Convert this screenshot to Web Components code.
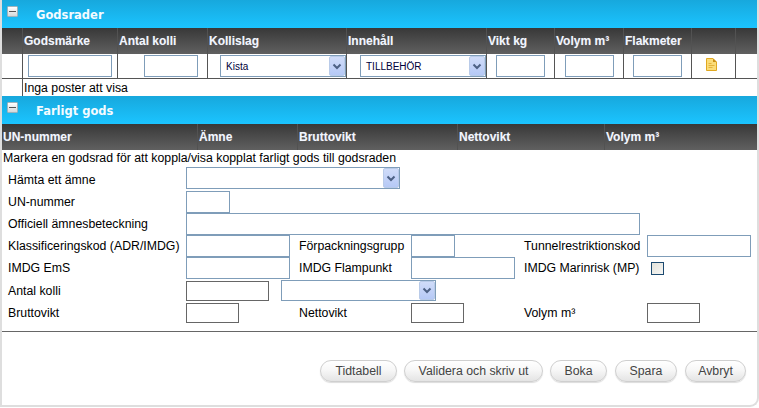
<!DOCTYPE html>
<html>
<head>
<meta charset="utf-8">
<title>Godsrader</title>
<style>
    html, body { margin: 0; background: #fff; }
    body { font: 12.3px "Liberation Sans", Arial, sans-serif; color: #000; }
</style>
</head>
<body>
<booking-panel>
    <section-bar>Godsrader</section-bar>
    <grid-row kind="head" columns="20 95 90 139 140 68 69 68 44 22">
        <span></span><span>Godsmärke</span><span>Antal kolli</span><span>Kollislag</span><span>Innehåll</span><span>Vikt kg</span><span>Volym m³</span><span>Flakmeter</span><span></span><span></span>
    </grid-row>
    <grid-row kind="body" columns="20 95 90 139 140 68 69 68 44 22">
        <span></span>
        <span><text-box width="84" style="margin-left:5px"></text-box></span>
        <span><text-box width="54" style="margin-left:26px"></text-box></span>
        <span><drop-down width="126" style="margin-left:12px">Kista</drop-down></span>
        <span><drop-down width="126" style="margin-left:13px">TILLBEHÖR</drop-down></span>
        <span><text-box width="49" style="margin-left:9px"></text-box></span>
        <span><text-box width="49" style="margin-left:10px"></text-box></span>
        <span><text-box width="49" style="margin-left:9px"></text-box></span>
        <span><note-icon></note-icon></span>
        <span></span>
    </grid-row>
    <grid-row kind="note" columns="20 735">
        <span></span><span>Inga poster att visa</span>
    </grid-row>
    <section-bar>Farligt gods</section-bar>
    <grid-row kind="head" columns="195 100 160 147 153">
        <span>UN-nummer</span><span>Ämne</span><span>Bruttovikt</span><span>Nettovikt</span><span>Volym m³</span>
    </grid-row>
    <hazard-form>
        <p slot="hint">Markera en godsrad för att koppla/visa kopplat farligt gods till godsraden</p>

        <label style="padding-top:2px">Hämta ett ämne</label>
        <drop-down width="214" class="wide"></drop-down>

        <label>UN-nummer</label>
        <text-box width="44" class="wide"></text-box>

        <label>Officiell ämnesbeteckning</label>
        <text-box width="454" class="wide"></text-box>

        <label>Klassificeringskod (ADR/IMDG)</label>
        <text-box width="104"></text-box>
        <label>Förpackningsgrupp</label>
        <text-box width="44"></text-box>
        <label>Tunnelrestriktionskod</label>
        <text-box width="104"></text-box>

        <label>IMDG EmS</label>
        <text-box width="104"></text-box>
        <label>IMDG Flampunkt</label>
        <text-box width="104"></text-box>
        <label>IMDG Marinrisk (MP)</label>
        <tick-box style="margin:5px 0 0 4px"></tick-box>

        <label>Antal kolli</label>
        <text-box width="83" height="20" tone="plain" style="margin-top:2px"></text-box>
        <drop-down width="155" height="21" class="rest" style="margin:1px 0 0 -18px"></drop-down>

        <label>Bruttovikt</label>
        <text-box width="53" height="20" tone="plain"></text-box>
        <label>Nettovikt</label>
        <text-box width="53" height="20" tone="plain"></text-box>
        <label>Volym m³</label>
        <text-box width="53" height="20" tone="plain"></text-box>
    </hazard-form>
    <action-bar>
        <pill-button width="77">Tidtabell</pill-button>
        <pill-button width="139">Validera och skriv ut</pill-button>
        <pill-button width="57">Boka</pill-button>
        <pill-button width="62" style="margin-left:1px">Spara</pill-button>
        <pill-button width="61" style="margin-left:1px">Avbryt</pill-button>
    </action-bar>
</booking-panel>

<script>
/// Base class: fills the shadow root once, from the markup() of the subclass.
class ShadowBox extends HTMLElement {
    connectedCallback() {
        if (this.shadowRoot) return
        const shadow = this.attachShadow({mode: "open"})
        shadow.innerHTML = this.markup()
    }
}

class BookingPanel extends ShadowBox {
    markup() {
        return `
            <style>
                :host {
                    display: block;
                    box-sizing: border-box;
                    width: 759px;
                    height: 407px;
                    border: 2px solid #dedede;
                    border-top: 0;
                    border-radius: 0 0 9px 0;
                    background: #fff;
                    overflow: hidden;
                }
            </style>
            <slot></slot>
        `
    }
}

/// Blue section title with a collapse button.
class SectionBar extends ShadowBox {
    markup() {
        return `
            <style>
                :host {
                    display: flex;
                    align-items: center;
                    height: 28px;
                    background: linear-gradient(#17a8dd, #1bc4ff);
                    color: #f4fbff;
                    font: bold 11.5px "DejaVu Sans", Verdana, sans-serif;
                }
                .toggle {
                    box-sizing: border-box;
                    width: 11px;
                    height: 11px;
                    margin: -5px 18px 0 5px;
                    display: flex;
                    align-items: center;
                    justify-content: center;
                    border: 1px solid #9fb4bd;
                    border-radius: 1px;
                    background: linear-gradient(#ffffff, #d4d8da);
                }
                .toggle i { display: block; width: 7px; height: 1px; background: #555; }
                .title { margin-top: 2px; }
            </style>
            <span class="toggle"><i></i></span>
            <span class="title"><slot></slot></span>
        `
    }
}

/// A table row; the columns attribute holds the pixel widths.
class GridRow extends ShadowBox {
    markup() {
        const kind = this.getAttribute("kind")
        const columns = this.getAttribute("columns").split(" ").map(w => w + "px").join(" ")
        return `
            <style>
                :host {
                    display: block;
                    --columns: ${columns};
                }
                .row { display: grid; grid-template-columns: var(--columns); }
                .head {
                    height: 26px;
                    align-items: stretch;
                    background: linear-gradient(#383838, #606060);
                    color: #f2f6ff;
                    font-weight: bold;
                    font-size: 12px;
                }
                .body { height: 25px; box-sizing: border-box; border-bottom: 1px solid #555; }
                .note { height: 17px; }
            </style>
            <div class="row ${kind}"><slot></slot></div>
        `
    }

    // cell separators live on the light DOM spans, so they are set here
    connectedCallback() {
        super.connectedCallback()
        const kind = this.getAttribute("kind")
        const line = kind == "head" ? "#525252" : "#555"
        Array.from(this.children).forEach((cell, index) => {
            cell.style.display = "flex"
            cell.style.alignItems = "center"
            cell.style.boxSizing = "border-box"
            cell.style.paddingLeft = kind == "body" ? "0" : "1px"
            cell.style.minWidth = "0"
            if (index > 0) cell.style.borderLeft = `1px solid ${line}`
            if (kind == "head") cell.style.textShadow = "0 0 1px rgba(255,255,255,.25)"
        })
    }
}

class TextBox extends ShadowBox {
    markup() {
        const width = this.getAttribute("width") || 100
        const height = this.getAttribute("height") || 22
        const color = this.getAttribute("tone") == "plain" ? "#666" : "#7f9db9"
        return `
            <style>
                :host { display: block; width: ${width}px; }
                input {
                    display: block;
                    box-sizing: border-box;
                    width: ${width}px;
                    height: ${height}px;
                    margin: 0;
                    padding: 1px 3px;
                    border: 1px solid ${color};
                    border-radius: 0;
                    outline: 0;
                    background: #fff;
                    font: 12px "Liberation Sans", Arial, sans-serif;
                }
            </style>
            <input type="text">
        `
    }
}

/// Drawn select box in the old Windows look.
class DropDown extends ShadowBox {
    markup() {
        const width = this.getAttribute("width") || 120
        const height = this.getAttribute("height") || 22
        return `
            <style>
                :host { display: block; width: ${width}px; }
                .box {
                    box-sizing: border-box;
                    display: flex;
                    width: ${width}px;
                    height: ${height}px;
                    border: 1px solid #7f9db9;
                    background: #fff;
                    font: 10px "Liberation Sans", Arial, sans-serif;
                    color: #00003a;
                }
                .value { flex: 1; padding-left: 5px; line-height: 21px; overflow: hidden; }
                .arrow {
                    box-sizing: border-box;
                    width: 16px;
                    margin: 0 0 0 1px;
                    display: flex;
                    align-items: center;
                    justify-content: center;
                    border: 1px solid #b9cbe9;
                    border-radius: 2px;
                    background: linear-gradient(#d0dcf9, #b6c9f6);
                }
            </style>
            <div class="box">
                <span class="value"><slot></slot></span>
                <span class="arrow">
                    <svg width="10" height="7" viewBox="0 0 10 7"><path d="M1.500 1.500L5 5 8.500 1.500" fill="none" stroke="#4d6185" stroke-width="2"/></svg>
                </span>
            </div>
        `
    }
}

class TickBox extends ShadowBox {
    markup() {
        return `
            <style>
                :host {
                    display: block;
                    box-sizing: border-box;
                    width: 13px;
                    height: 13px;
                    border: 1px solid #1c4a70;
                    background: linear-gradient(135deg, #e2e2da, #f6f6f4);
                }
            </style>
        `
    }
}

class NoteIcon extends ShadowBox {
    markup() {
        return `
            <style>
                :host { display: block; width: 11px; height: 13px; margin: -4px 0 0 14px; line-height: 0; }
            </style>
            <svg width="11" height="13" viewBox="0 0 11 13">
                <path d="M.5.5h6.500l3.500 3.500v8.500h-10z" fill="#fbdc78" stroke="#e0a820"/>
                <path d="M7 .5v3.500h3.500z" fill="#c98f14"/>
                <path d="M2.500 5.500h3M2.500 7.500h6M2.500 9.500h4" fill="none" stroke="#e3b43c"/>
            </svg>
        `
    }
}

/// Form with the column grid of the dangerous goods fields.
class HazardForm extends ShadowBox {
    markup() {
        return `
            <style>
                :host { display: block; height: 182px; box-sizing: border-box; border-bottom: 1px solid #666; }
                .hint { height: 17px; padding: 0 0 0 1px; }
                ::slotted(p) { margin: 0; line-height: 17px; }
                .fields {
                    display: grid;
                    padding-left: 6px;
                    grid-template-columns: 178px 113px 112px 113px 123px 110px;
                    grid-template-rows: 24px 22px 22px 22px 22px 24px 20px;
                    align-items: start;
                }
                ::slotted(label) { align-self: stretch; display: flex; align-items: center; }
                ::slotted(.wide) { grid-column: 2 / -1; }
                ::slotted(.rest) { grid-column: 3 / -1; }
            </style>
            <div class="hint"><slot name="hint"></slot></div>
            <div class="fields"><slot></slot></div>
        `
    }
}

class ActionBar extends ShadowBox {
    markup() {
        return `
            <style>
                :host {
                    display: flex;
                    justify-content: flex-end;
                    gap: 7px;
                    padding: 28px 11px 0 0;
                }
            </style>
            <slot></slot>
        `
    }
}

class PillButton extends ShadowBox {
    markup() {
        const width = this.getAttribute("width")
        return `
            <style>
                :host { display: block; }
                button {
                    display: block;
                    box-sizing: border-box;
                    width: ${width}px;
                    height: 22px;
                    padding: 0;
                    border: 1px solid #cfcfcf;
                    border-radius: 11px;
                    background: linear-gradient(#ffffff, #f7f7f7 45%, #e4e4e4);
                    box-shadow: 0 1px 1px rgba(0, 0, 0, .14);
                    color: #444;
                    font: 12.3px "Liberation Sans", Arial, sans-serif;
                }
            </style>
            <button type="button"><slot></slot></button>
        `
    }
}

customElements.define("booking-panel", BookingPanel)
customElements.define("section-bar", SectionBar)
customElements.define("grid-row", GridRow)
customElements.define("text-box", TextBox)
customElements.define("drop-down", DropDown)
customElements.define("tick-box", TickBox)
customElements.define("note-icon", NoteIcon)
customElements.define("hazard-form", HazardForm)
customElements.define("action-bar", ActionBar)
customElements.define("pill-button", PillButton)
</script>
</body>
</html>
